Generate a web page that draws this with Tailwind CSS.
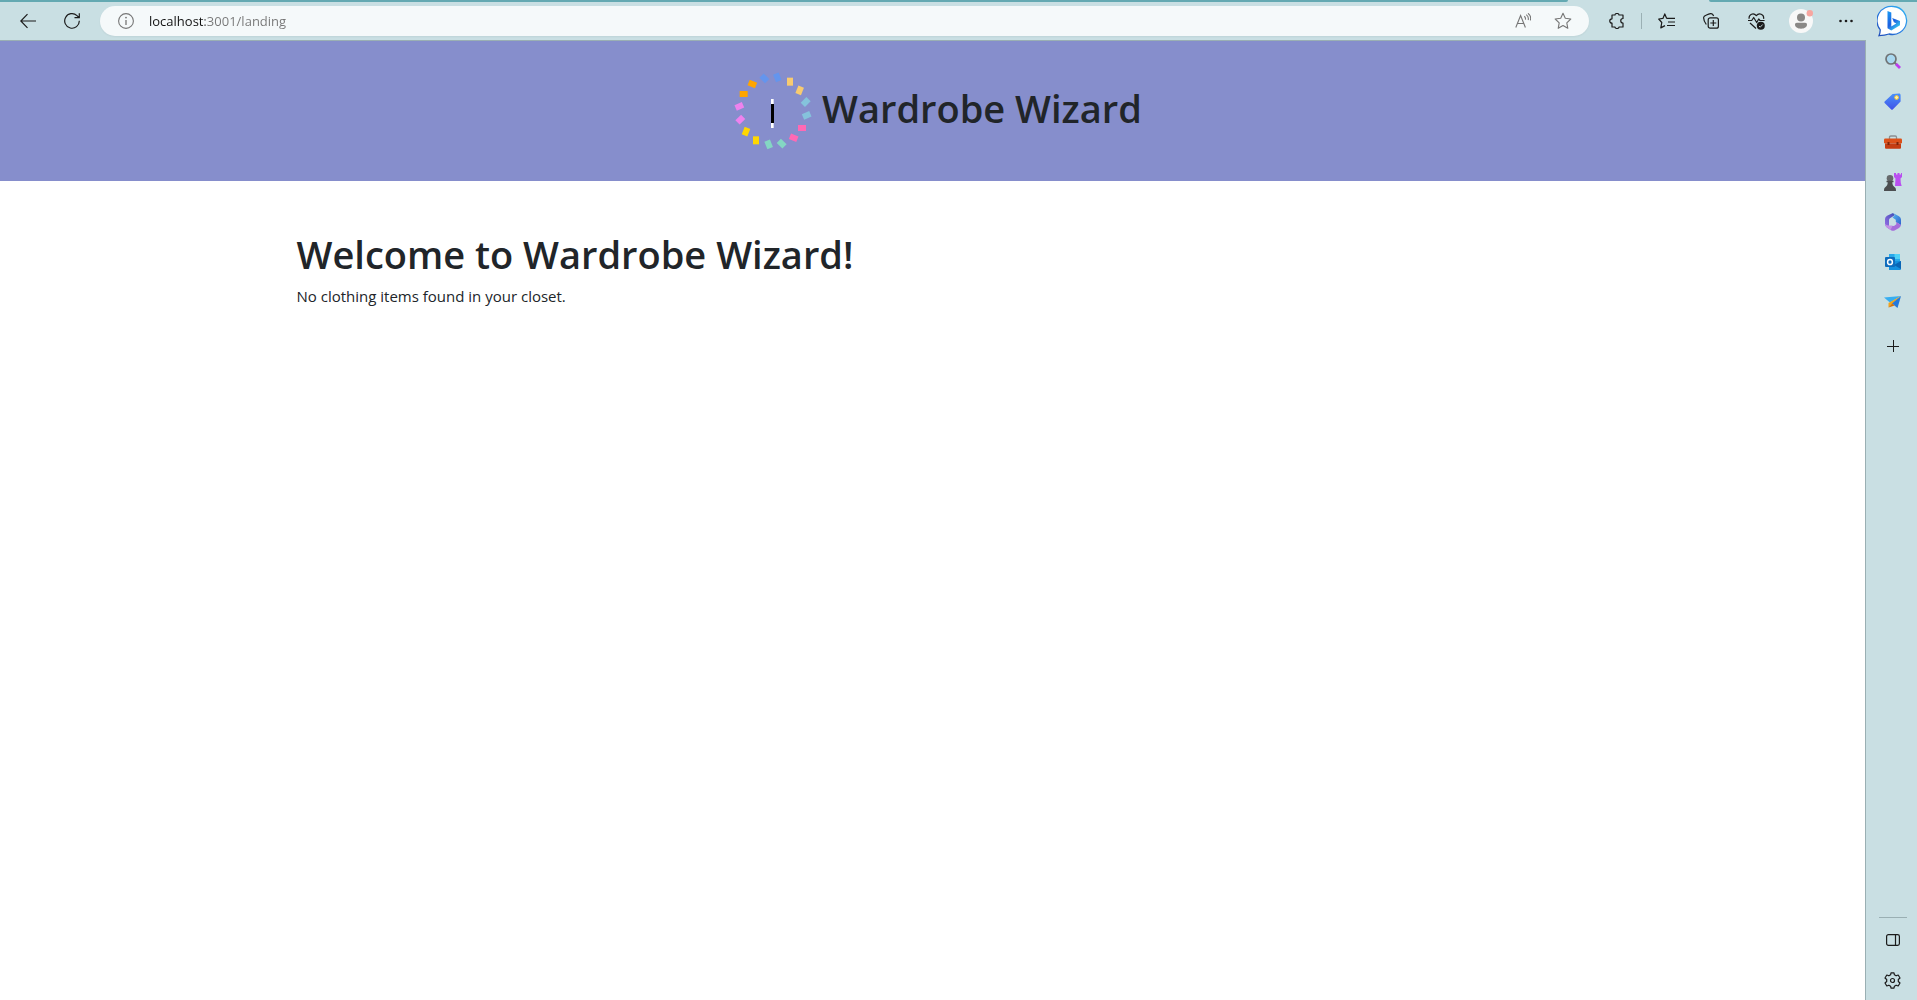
<!DOCTYPE html>
<html lang="en">
<head>
<meta charset="utf-8">
<title>Wardrobe Wizard</title>
<script src="https://cdn.jsdelivr.net/npm/@tailwindcss/browser@4"></script>
</head>
<body class="flex min-h-screen bg-[#c9dfe3] font-['Open_Sans','Noto_Sans',sans-serif] text-[#212529]">
<div class="flex min-w-0 flex-1 flex-col">
  <!-- browser toolbar -->
  <header class="relative flex h-10 items-center gap-3 pt-[2px] pl-3 pr-1 text-[#1b1b1b]">
    <div class="absolute top-0 left-0 right-[298px] h-[2px] rounded-br bg-[#64a9b2]"></div>
    <div class="absolute top-0 right-0 h-[2px] w-[157px] rounded-bl bg-[#64a9b2]"></div>
    <button aria-label="Back" class="flex size-8 items-center justify-center">
      <svg class="size-4" viewBox="0 0 16 16" fill="none" stroke="currentColor" stroke-width="1.2"><path d="M16 8H.8M7.5 1.2.8 8l6.7 6.8"/></svg>
    </button>
    <button aria-label="Refresh" class="flex size-8 items-center justify-center">
      <svg class="size-4" viewBox="0 0 16 16" fill="none" stroke="currentColor" stroke-width="1.2"><path d="M15.3 7.8A7.3 7.3 0 1 1 13 2.6l2 2M15.3.2v4.5h-4.8"/></svg>
    </button>
    <div class="flex h-[30px] flex-1 items-center rounded-full bg-[#f5f9fa] pl-[18px] pr-4 text-[#767676] shadow-xs">
      <svg class="size-4" viewBox="0 0 16 16" fill="none" stroke="currentColor"><circle cx="8" cy="8" r="7.4" stroke-width="1.1"/><path d="M8 7v5" stroke-width="1.3"/><circle cx="8" cy="4.6" r=".9" fill="currentColor" stroke="none"/></svg>
      <input aria-label="Address" value="localhost:3001/landing" class="ml-[15px] min-w-0 flex-1 bg-[linear-gradient(to_right,#111_56px,#767676_56px)] bg-clip-text pt-[2px] text-[13px] text-transparent outline-none">
      <button aria-label="Read aloud" class="mr-[22px] flex size-4 items-center justify-center">
        <svg class="size-4 shrink-0" viewBox="0 0 16 16" fill="none" stroke="currentColor" stroke-width="1.1"><path d="M.8 14.5 5.6 2.5l4.8 12M2.3 10.5h6.6M9.3 3.2c1 .8 1.4 2 1.1 3.4M11.2 1.6c1.900 1.400 2.500 3.300 2 5.400M13 .3c2.400 1.800 3.100 4.300 2.400 7"/></svg>
      </button>
      <button aria-label="Add to favorites" class="flex size-5 items-center justify-center">
        <svg class="size-[18px] shrink-0" viewBox="0 0 18 18" fill="none" stroke="currentColor" stroke-width="1.1" stroke-linejoin="round"><path d="m9 1.3 2.3 5 5.500.7-4 3.800 1 5.500L9 13.600l-4.800 2.700 1-5.500-4-3.800 5.500-.7z"/></svg>
      </button>
    </div>
    <div class="flex items-center gap-[13px]">
      <button aria-label="Extensions" class="flex size-8 items-center justify-center">
        <svg class="size-4" viewBox="0 0 16 16" fill="none" stroke="currentColor" stroke-width="1.2" stroke-linejoin="round"><path d="M3 2h3c0-2 4-2 4 0h4v3.5c-3 0-3 4.5 0 4.5v4h-4c0 2-4 2-4 0H3v-3.8c-3 0-3-4.4 0-4.4z"/></svg>
      </button>
      <div class="-mx-[5px] h-4 w-px bg-[#9bb0b4]"></div>
      <button aria-label="Favorites" class="flex size-8 items-center justify-center">
        <svg class="h-4 w-[17px]" viewBox="0 0 17 16" fill="none" stroke="currentColor" stroke-width="1.2" stroke-linejoin="round"><path d="M8.7 5.4 6.8.9 4.9 5.4.7 6l3.1 3.5-1 5.4 4.2-2.3M8.7 5.4H17M10 9h7M9 12.5h8"/></svg>
      </button>
      <button aria-label="Collections" class="flex size-8 items-center justify-center">
        <svg class="size-4" viewBox="0 0 16 16" fill="none" stroke="currentColor" stroke-width="1.2"><rect x="5.2" y="4.8" width="10.2" height="10.4" rx="2"/><path d="M10.3 7v6M7.3 10h6M3.3 11.5C1.5 9 .5 6 .7 4.2.8 2.6 5.8 1 7.6.7c1.4-.2 2.6 1 3 2.3"/></svg>
      </button>
      <button aria-label="Browser essentials" class="flex size-8 items-center justify-center">
        <svg class="size-[17px]" viewBox="0 0 17 17" fill="none" stroke="currentColor" stroke-width="1.2" stroke-linejoin="round"><path d="M1.1 5.8C.6 1.2 5.6-.7 8.3 2.7c2.7-3.4 8-1.5 7.3 3.1M0 7.5h3.7l2-3 3 5 2-3.5 1.3 1.5h4.6M2 10l6 5.5"/><circle cx="12.8" cy="12.8" r="4" fill="currentColor" stroke="none"/><path d="m11 13 1.2 1.2 2.5-2.7" stroke="#c9dfe3" stroke-width=".9"/></svg>
      </button>
      <button aria-label="Profile" class="flex size-8 items-center justify-center">
        <svg class="size-6" viewBox="0 0 24 24"><circle cx="12" cy="12" r="12" fill="#f8f8f8"/><circle cx="12" cy="8.5" r="4" fill="#8a8886"/><path d="M6 15.5c0-1 .8-1.7 1.8-1.7h8.4c1 0 1.8.7 1.8 1.7 0 2.5-2.6 4.2-6 4.2s-6-1.7-6-4.2" fill="#8a8886"/><circle cx="20.8" cy="4.2" r="3.2" fill="#f7a6a0"/></svg>
      </button>
      <button aria-label="Settings and more" class="flex size-8 items-center justify-center">
        <svg class="h-4 w-4" viewBox="0 0 16 16" fill="currentColor"><circle cx="2.5" cy="8" r="1.3"/><circle cx="8" cy="8" r="1.3"/><circle cx="13.5" cy="8" r="1.3"/></svg>
      </button>
    </div>
  </header>

  <!-- web page -->
  <div class="flex-1 border-t border-r border-[#9aafb3] bg-white">
    <div class="flex h-[140px] items-center justify-center bg-[#868ecc]">
      <svg class="h-20 w-[99px] shrink-0" viewBox="9 33 297 240" aria-hidden="true">
        <g fill="#6495ed"><rect x="-12" y="-9" width="24" height="18" transform="translate(133 55) rotate(45)"/><rect x="-12" y="-9" width="24" height="18" transform="translate(172 52) rotate(68)"/></g>
        <g fill="#f8cb70"><rect x="-12" y="-9" width="24" height="18" transform="translate(210 65) rotate(90)"/><rect x="-12" y="-9" width="24" height="18" transform="translate(239 91) rotate(112)"/></g>
        <g fill="#85c3dc"><rect x="-12" y="-9" width="24" height="18" transform="translate(257 126) rotate(135)"/><rect x="-12" y="-9" width="24" height="18" transform="translate(260 166) rotate(157)"/></g>
        <g fill="#ff69b4"><rect x="-12" y="-9" width="24" height="18" transform="translate(246 204)"/><rect x="-12" y="-9" width="24" height="18" transform="translate(221 233) rotate(22)"/></g>
        <g fill="#84d7c3"><rect x="-12" y="-9" width="24" height="18" transform="translate(185 251) rotate(45)"/><rect x="-12" y="-9" width="24" height="18" transform="translate(146 253) rotate(68)"/></g>
        <g fill="#ffd700"><rect x="-12" y="-9" width="24" height="18" transform="translate(108 241) rotate(90)"/><rect x="-12" y="-9" width="24" height="18" transform="translate(78 215) rotate(112)"/></g>
        <g fill="#ee82ee"><rect x="-12" y="-9" width="24" height="18" transform="translate(61 179) rotate(135)"/><rect x="-12" y="-9" width="24" height="18" transform="translate(58 139) rotate(157)"/></g>
        <g fill="#ffa500"><rect x="-12" y="-9" width="24" height="18" transform="translate(71 102)"/><rect x="-12" y="-9" width="24" height="18" transform="translate(97 72) rotate(22)"/></g>
        <path d="M153 117h8v87h-8z" fill="#fff"/><path d="M153 132h9v57h-9z" fill="#000"/>
      </svg>
      <h1 class="pb-[6px] text-[38px] leading-[48px] font-semibold">Wardrobe Wizard</h1>
    </div>
    <main class="mx-auto max-w-[1320px] px-6 pt-[49px]">
      <h2 class="text-[38px] leading-[48px] font-semibold">Welcome to Wardrobe Wizard!</h2>
      <p class="mt-[6px] text-[15px] leading-6">No clothing items found in your closet.</p>
    </main>
  </div>
</div>

<!-- browser side bar -->
<aside class="relative flex w-[51px] flex-col items-center pl-[2px] text-[#1b1b1b]">
  <div class="absolute top-0 left-0 right-0 h-[2px] bg-[#64a9b2]"></div>
  <button aria-label="Bing chat" class="relative flex h-[41px] items-center justify-center">
    <svg class="size-8" viewBox="0 0 32 32"><defs><linearGradient id="ring" x1="1" y1="0" x2="0" y2="1"><stop stop-color="#2fb4f2"/><stop offset=".5" stop-color="#2b83e6"/><stop offset="1" stop-color="#1f49b5"/></linearGradient><linearGradient id="b" x1="0" y1="0" x2=".6" y2="1"><stop stop-color="#1b9df5"/><stop offset=".6" stop-color="#1c5fe0"/><stop offset="1" stop-color="#35c8ef"/></linearGradient></defs><path d="M16.500 1.500a14 14 0 1 1-4.500 27.500c-3 1-6 1.500-10 1.700 1-2.400 1.300-4 1.200-6A14.300 14.300 0 0 1 16.500 1.500" fill="#fff" stroke="url(#ring)" stroke-width="1.3"/><path d="m10.500 6 3.800 1.500v14l5-3-2.400-1.300-1.700-4.100 7.800 3v4.200l-8.700 5.200-3.800-2.300z" fill="url(#b)"/></svg>
  </button>
  <button aria-label="Search" class="flex h-10 items-center"><svg class="size-4" viewBox="0 0 16 16"><path d="m9.5 9.5 2 2" stroke="#777" stroke-width="2"/><path d="m11 11 4 4" stroke="#bd3cf0" stroke-width="2.8"/><circle cx="6" cy="6" r="5" fill="#a8d8f0" stroke="#707476" stroke-width="1.7"/></svg></button>
  <button aria-label="Shopping" class="flex h-[41px] items-center"><svg class="size-[17px]" viewBox="0 0 17 17"><defs><linearGradient id="tag" x1="0" y1="0" x2="0" y2="1"><stop stop-color="#4a92fa"/><stop offset="1" stop-color="#4052e8"/></linearGradient></defs><path d="M8.6.9 15 .6c1 0 1.6.6 1.6 1.6v6.3L9 16.2c-.7.7-1.4.7-2 0L.9 10.3c-.7-.7-.7-1.3 0-2z" fill="url(#tag)"/><circle cx="12.6" cy="4.5" r="1.9" fill="#fff3b0" stroke="#f4c430"/></svg></button>
  <button aria-label="Tools" class="flex h-10 items-center"><svg class="h-4 w-[18px]" viewBox="0 0 18 16"><path d="M5.5 5V3.2C5.5 2.3 6 2 6.8 2h4.4c.8 0 1.3.3 1.3 1.2V5" fill="none" stroke="#8b8f92" stroke-width="1.3"/><rect y="4.5" width="18" height="5" rx="1.2" fill="#dc5019"/><path d="M1 9.5h16v4c0 .8-.5 1.3-1.3 1.3H2.3C1.5 14.8 1 14.3 1 13.5z" fill="#c43d12"/><path d="M3.5 8h2v3h-2zM12.5 8h2v3h-2z" fill="#7c2408"/></svg></button>
  <button aria-label="Games" class="flex h-10 items-center"><svg class="size-[18px]" viewBox="0 0 18 18"><path d="M10 0h2v1.500h1.500V0h2v1.500H17V0h1v4l-1.500 1.500.3 4.500.9 3H11l.5-7.500L10 4z" fill="#b94ff0"/><circle cx="6" cy="5.3" r="3.3" fill="#66696b"/><path d="M2.500 7.800h7v1.500H8.300c0 2.300.7 3.700 2.700 5.200.8.600 1 1.500 1 3.500H0c0-2 .2-2.900 1-3.500 2-1.500 2.700-2.900 2.700-5.200H2.500z" fill="#4b4e50"/></svg></button>
  <button aria-label="Microsoft 365" class="flex h-10 items-center"><svg class="size-[18px]" viewBox="0 0 18 18"><defs><linearGradient id="m1" x1="0" y1="1" x2="1" y2="0"><stop stop-color="#9c6fe8"/><stop offset="1" stop-color="#3d4fb5"/></linearGradient><linearGradient id="m2" x1="0" y1="0" x2="1" y2="1"><stop stop-color="#55b7ee"/><stop offset="1" stop-color="#2f62cf"/></linearGradient></defs><path d="M9 0 3 2.800Q1 4 1 6v5q0 2 1.500 3L5 15.500V7q0-1 1-1.800L11 2z" fill="url(#m1)"/><path d="m9 0 6 3.300q2 1.200 2 3.200v5.500L11.800 9V6.800L8.500 4.500 11 2z" fill="url(#m2)"/><path d="M17 12q-.5 2-2 3l-4 2.200q-2 1.100-4 0l-4.500-3 4.500-1.500 3 .3 2.300-1.700V9z" fill="#a66edb"/><path d="M1 11q2 1.700 5 1.500l2.500.600-2 3.800-4-2.900Q1 13 1 11" fill="#c391e6"/></svg></button>
  <button aria-label="Outlook" class="flex h-10 items-center"><svg class="size-4" viewBox="0 0 16 16"><path d="M4 0h11v8H4z" fill="#28a8ea"/><path d="M9.500 0H15v5H9.500z" fill="#50d2f7"/><path d="M4 7h12v7.500c0 1-.5 1.500-1.500 1.500H4z" fill="#1490df"/><path d="m9 11 7-4v8z" fill="#0a65b5"/><rect y="3" width="10" height="10" rx="1" fill="#0f6cbd"/><ellipse cx="5" cy="8" rx="2.4" ry="2.6" fill="none" stroke="#fff" stroke-width="1.5"/></svg></button>
  <button aria-label="Drop" class="flex h-10 items-center"><svg class="h-4 w-[17px]" viewBox="0 0 17 16"><path d="M0 3.500 17 2 6 8.500z" fill="#37aef0"/><path d="M17 2 4.500 9v4.500z" fill="#f2a51c"/><path d="M17 2 8 9.500 13.500 14z" fill="#2379dd"/><path d="m4.500 13.500 3.700-4 2.500 2z" fill="#d4700e"/></svg></button>
  <button aria-label="Customize" class="flex h-12 items-center"><svg class="size-3" viewBox="0 0 12 12" stroke="currentColor"><path d="M6.500 0v12M0 6.500h12"/></svg></button>
  <div class="mt-auto h-px w-7 bg-[#9aafb3]"></div>
  <button aria-label="Hide sidebar" class="mt-[2px] flex h-10 items-center"><svg class="h-3 w-[14px]" viewBox="0 0 14 12" fill="none" stroke="currentColor" stroke-width="1.2"><rect x=".6" y=".6" width="12.8" height="10.8" rx="1.8"/><path d="M9.500.6v10.800"/></svg></button>
  <button aria-label="Settings" class="flex h-10 items-center"><svg class="size-[17px]" viewBox="0 0 17 17" fill="none" stroke="currentColor" stroke-width="1.2" stroke-linejoin="round"><path d="m7 .8-.4 2L4.900 3.800 2.800 3 1 6l1.700 1.500v2L1 11l1.800 3 2.100-.8 1.700 1 .4 2h3l.4-2 1.700-1 2.100.8L16 11l-1.700-1.500v-2L16 6l-1.800-3-2.100.8-1.700-1-.4-2z"/><circle cx="8.500" cy="8.500" r="2"/></svg></button>
</aside>
</body>
</html>
